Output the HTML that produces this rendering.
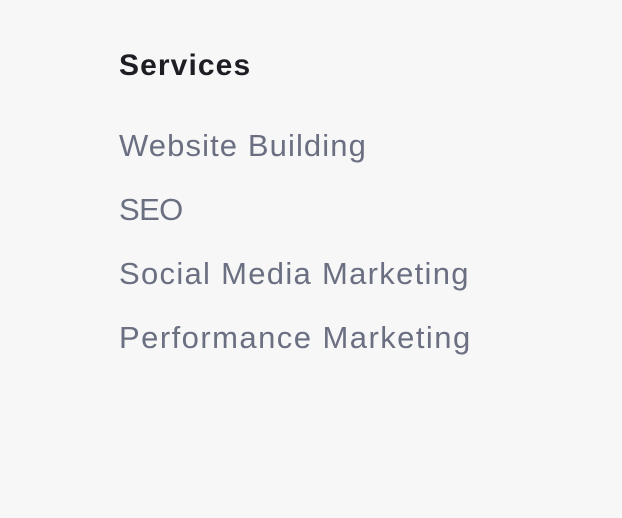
<!DOCTYPE html>
<html><head><style>
html,body{margin:0;padding:0;width:622px;height:518px;background:#f7f7f7;overflow:hidden}
body{font-family:"Liberation Sans",sans-serif;position:relative}
h3{position:absolute;left:119px;top:48px;margin:0;font-size:30px;font-weight:bold;color:#1d1d24;line-height:36px;letter-spacing:1.1px}
.l{position:absolute;left:119px;margin:0;font-size:31px;color:#6b6f82;line-height:36px;letter-spacing:1.1px;white-space:nowrap}
</style></head><body>
<h3>Services</h3>
<div class="l" style="top:128px">Website Building</div>
<div class="l" style="top:192px;letter-spacing:-0.6px">SEO</div>
<div class="l" style="top:256px;letter-spacing:1.3px">Social Media Marketing</div>
<div class="l" style="top:320px;letter-spacing:1.45px">Performance Marketing</div>
</body></html>
